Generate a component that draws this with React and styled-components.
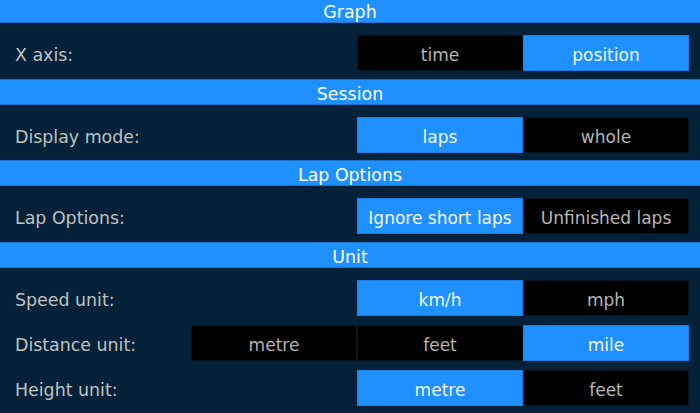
import React, { useState } from 'react';
import styled, { createGlobalStyle } from 'styled-components';

const GlobalStyle = createGlobalStyle`
  html, body {
    margin: 0;
    padding: 0;
    background: #03223a;
    overflow: hidden;
  }
  body {
    font-family: "DejaVu Sans", "Liberation Sans", sans-serif;
  }
`;

const Panel = styled.div`
  width: 700px;
  height: 413px;
  overflow: hidden;
  background: #03223a;
`;

const Inner = styled.div`
  margin-top: -3px;
`;

// ==============================
const SectionHeader = styled.div`
  height: 24px;
  line-height: 29px;
  background: #1e90ff;
  border-top: 1px solid #1a72cc;
  border-bottom: 1px solid #1a72cc;
  color: #ffffff;
  text-align: center;
  font-size: 17.4px;
  overflow: hidden;
`;

const SectionBody = styled.div`
  display: flex;
  flex-direction: column;
  gap: 9px;
  padding: 12px 11px 7.5px 15px;
`;

const Row = styled.div`
  display: flex;
  align-items: center;
  justify-content: space-between;
  height: 36px;
`;

const Label = styled.div`
  color: #c0c0c0;
  font-size: 17.4px;
  white-space: nowrap;
  padding-top: 4px;
`;

const Segmented = styled.div`
  display: flex;
  height: 36px;
`;

const Segment = styled.button`
  width: 166px;
  height: 36px;
  box-sizing: border-box;
  margin: 0;
  padding: 4px 0 0;
  border: 1px solid ${props => (props.active ? '#1b7ee0' : '#0a1520')};
  background: ${props => (props.active ? '#1e90ff' : '#000000')};
  color: ${props => (props.active ? '#f4f6ff' : '#b5b5b5')};
  font-family: "DejaVu Sans", "Liberation Sans", sans-serif;
  font-size: 17px;
  white-space: nowrap;
  cursor: pointer;
  outline: none;
`;

// ================================================

const sections = [
  {
    title: 'Graph',
    rows: [{ label: 'X axis:', options: ['time', 'position'], selected: 1 }]
  },
  {
    title: 'Session',
    rows: [{ label: 'Display mode:', options: ['laps', 'whole'], selected: 0 }]
  },
  {
    title: 'Lap Options',
    rows: [
      {
        label: 'Lap Options:',
        options: ['Ignore short laps', 'Unfinished laps'],
        selected: 0
      }
    ]
  },
  {
    title: 'Unit',
    rows: [
      { label: 'Speed unit:', options: ['km/h', 'mph'], selected: 0 },
      { label: 'Distance unit:', options: ['metre', 'feet', 'mile'], selected: 2 },
      { label: 'Height unit:', options: ['metre', 'feet'], selected: 0 }
    ]
  }
];

const OptionRow = ({ row }) => {
  const [selected, setSelected] = useState(row.selected);
  return (
    <Row>
      <Label>{row.label}</Label>
      <Segmented>
        {row.options.map((opt, i) => (
          <Segment key={opt} active={i === selected} onClick={() => setSelected(i)}>
            {opt}
          </Segment>
        ))}
      </Segmented>
    </Row>
  );
};

export default function App() {
  return (
    <>
      <GlobalStyle />
      <Panel>
        <Inner>
          {sections.map(section => (
            <section key={section.title}>
              <SectionHeader>{section.title}</SectionHeader>
              <SectionBody>
                {section.rows.map(row => (
                  <OptionRow key={row.label} row={row} />
                ))}
              </SectionBody>
            </section>
          ))}
        </Inner>
      </Panel>
    </>
  );
}
